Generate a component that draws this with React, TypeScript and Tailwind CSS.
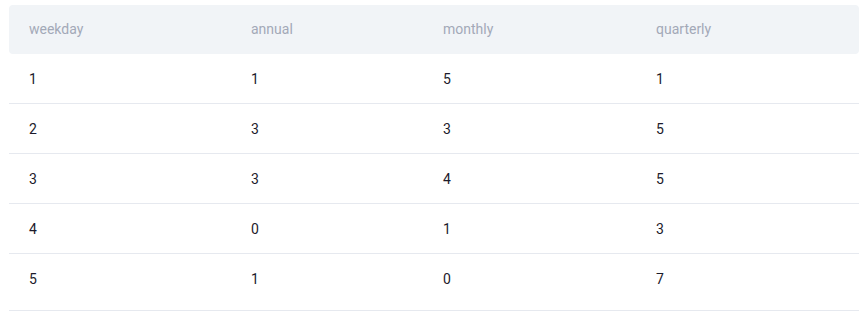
const columns = ["weekday", "annual", "monthly", "quarterly"];

const rows = [
  [1, 1, 5, 1],
  [2, 3, 3, 5],
  [3, 3, 4, 5],
  [4, 0, 1, 3],
  [5, 1, 0, 7],
];

const grid = "grid grid-cols-[222px_192px_213px_223px]";

export default function App() {
  return (
    <div className="bg-white w-[866px] h-[320px] pt-[5px] px-[9px] font-['Roboto',sans-serif] text-sm">
      <div className="w-[850px] border-b border-[#e6e9ef] pb-[6px]">
        <div className={`${grid} h-[49px] items-center rounded bg-[#f1f4f7] text-[#a3a9b7]`}>
          {columns.map((c) => (
            <div key={c} className="px-5 pb-px">
              {c}
            </div>
          ))}
        </div>
        {rows.map((r, i) => (
          <div
            key={i}
            className={`${grid} h-[50px] items-center text-[#1c1b2b] ${
              i < rows.length - 1 ? "border-b border-[#e6e9ef]" : ""
            }`}
          >
            {r.map((v, j) => (
              <div key={j} className="px-5">
                {v}
              </div>
            ))}
          </div>
        ))}
      </div>
    </div>
  );
}
